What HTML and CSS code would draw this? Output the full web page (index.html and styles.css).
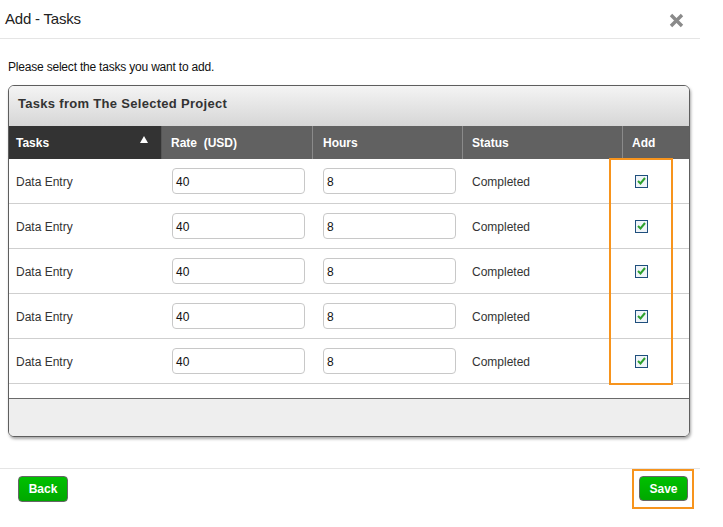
FILE: index.html
```html
<!DOCTYPE html>
<html>
<head>
<meta charset="utf-8">
<link rel="stylesheet" href="styles.css">
</head>
<body>
<div class="dialog">
  <div class="dlg-head">
    <span class="dlg-title">Add - Tasks</span>
    <svg class="close" width="15" height="15" viewBox="0 0 15 15"><path d="M2 2 L13 13 M13 2 L2 13" stroke="#8a8a8a" stroke-width="3.4" stroke-linecap="butt"/></svg>
  </div>
  <p class="intro">Please select the tasks you want to add.</p>
  <div class="panel">
    <div class="panel-title">Tasks from The Selected Project</div>
    <div class="grid">
      <div class="row head">
        <div class="c c1 sorted">Tasks<span class="tri"></span></div>
        <div class="c c2">Rate&nbsp; (USD)</div>
        <div class="c c3">Hours</div>
        <div class="c c4">Status</div>
        <div class="c c5">Add</div>
      </div>
      <div class="row">
        <div class="c c1">Data Entry</div>
        <div class="c c2"><span class="inp">40</span></div>
        <div class="c c3"><span class="inp">8</span></div>
        <div class="c c4">Completed</div>
        <div class="c c5"><span class="chk"><svg width="9" height="8" viewBox="0 0 9 8"><path d="M1 4 L3.5 6.5 L8 1" stroke="#2ea12e" stroke-width="2" fill="none"/></svg></span></div>
      </div>
      <div class="row">
        <div class="c c1">Data Entry</div>
        <div class="c c2"><span class="inp">40</span></div>
        <div class="c c3"><span class="inp">8</span></div>
        <div class="c c4">Completed</div>
        <div class="c c5"><span class="chk"><svg width="9" height="8" viewBox="0 0 9 8"><path d="M1 4 L3.5 6.5 L8 1" stroke="#2ea12e" stroke-width="2" fill="none"/></svg></span></div>
      </div>
      <div class="row">
        <div class="c c1">Data Entry</div>
        <div class="c c2"><span class="inp">40</span></div>
        <div class="c c3"><span class="inp">8</span></div>
        <div class="c c4">Completed</div>
        <div class="c c5"><span class="chk"><svg width="9" height="8" viewBox="0 0 9 8"><path d="M1 4 L3.5 6.5 L8 1" stroke="#2ea12e" stroke-width="2" fill="none"/></svg></span></div>
      </div>
      <div class="row">
        <div class="c c1">Data Entry</div>
        <div class="c c2"><span class="inp">40</span></div>
        <div class="c c3"><span class="inp">8</span></div>
        <div class="c c4">Completed</div>
        <div class="c c5"><span class="chk"><svg width="9" height="8" viewBox="0 0 9 8"><path d="M1 4 L3.5 6.5 L8 1" stroke="#2ea12e" stroke-width="2" fill="none"/></svg></span></div>
      </div>
      <div class="row">
        <div class="c c1">Data Entry</div>
        <div class="c c2"><span class="inp">40</span></div>
        <div class="c c3"><span class="inp">8</span></div>
        <div class="c c4">Completed</div>
        <div class="c c5"><span class="chk"><svg width="9" height="8" viewBox="0 0 9 8"><path d="M1 4 L3.5 6.5 L8 1" stroke="#2ea12e" stroke-width="2" fill="none"/></svg></span></div>
      </div>
      <div class="highlight"></div>
    </div>
    <div class="spacer"></div>
    <div class="panel-foot"></div>
  </div>
  <div class="dlg-foot">
    <button class="btn">Back</button>
    <span class="hl-btn"><button class="btn">Save</button></span>
  </div>
</div>
</body>
</html>
```
FILE: styles.css
```css
* { box-sizing: border-box; }
body {
  margin: 0;
  background: #fff;
  font-family: "Liberation Sans", Arial, sans-serif;
  color: #333;
}
.dialog { width: 700px; }
.dlg-head {
  height: 39px;
  border-bottom: 1px solid #e5e5e5;
  display: flex;
  align-items: center;
  justify-content: space-between;
  padding: 0 16px 0 5px;
}
.dlg-title {
  font-size: 15px;
  color: #222;
  letter-spacing: -0.2px;
  margin-top: -1px;
}
.close { margin-top: 2px; }
.intro {
  margin: 21px 0 0 8px;
  font-size: 12px;
  line-height: 14px;
  color: #111;
  letter-spacing: -0.2px;
}
.panel {
  margin: 11px 0 0 8px;
  width: 682px;
  border: 1px solid #5e5e5e;
  border-radius: 6px;
  box-shadow: 1px 2px 3px rgba(0,0,0,0.35);
  overflow: hidden;
}
.panel-title {
  height: 40px;
  background: linear-gradient(#f4f4f4, #d6d6d6);
  font-size: 13px;
  font-weight: bold;
  color: #333;
  padding: 10px 0 0 9px;
  letter-spacing: 0.3px;
}
.grid { position: relative; }
.row {
  display: flex;
  height: 45px;
  border-bottom: 1px solid #cfcfcf;
  font-size: 12px;
  align-items: center;
  color: #333;
}
.row.head {
  height: 33px;
  background: #616161;
  border-bottom: none;
  color: #fff;
  font-weight: bold;
  align-items: stretch;
}
.c { display: flex; align-items: center; height: 100%; }
.c1 { width: 153px; padding-left: 7px; padding-top: 1px; }
.c2 { width: 151px; padding-left: 10px; }
.c3 { width: 150px; padding-left: 10px; }
.c4 { width: 160px; padding-left: 9px; padding-top: 1px; }
.c5 { width: 66px; padding-left: 12px; }
.head .c { border-right: 1px solid #8a8a8a; padding-top: 1px; }
.head .c5 { border-right: none; padding-left: 9px; }
.head .c1 { border-right-color: #555; }
.head .c2 { padding-left: 9px; }
.sorted { background: #333; position: relative; justify-content: space-between; padding-right: 13px; }
.tri {
  width: 0; height: 0;
  border-left: 4px solid transparent;
  border-right: 4px solid transparent;
  border-bottom: 7px solid #fff;
  margin-top: -7px;
}
.inp {
  display: block;
  width: 133px;
  height: 26px;
  border: 1px solid #c8c8c8;
  border-radius: 4px;
  padding: 6px 0 0 3px;
  font-size: 12px;
  color: #111;
}
.chk {
  width: 13px;
  height: 13px;
  border: 1px solid #1f4f7d;
  background: #f0f4f8;
  display: flex;
  align-items: center;
  justify-content: center;
}
.highlight {
  position: absolute;
  left: 600px;
  top: 32px;
  width: 64px;
  height: 227px;
  border: 2px solid #f7941d;
}
.spacer { height: 15px; border-bottom: 1px solid #6a6a6a; }
.panel-foot { height: 37px; background: #eee; }
.dlg-foot {
  margin-top: 31px;
  border-top: 1px solid #e5e5e5;
  display: flex;
  justify-content: space-between;
  align-items: flex-start;
  padding: 7px 6px 0 18px;
}
.btn {
  width: 50px;
  height: 26px;
  border: 1px solid #666;
  border-radius: 4px;
  background: linear-gradient(#00c000, #00a800);
  color: #fff;
  font-family: "Liberation Sans", Arial, sans-serif;
  font-weight: bold;
  font-size: 12px;
  padding: 0;
}
.hl-btn {
  display: block;
  border: 2px solid #f7941d;
  padding: 5px 4px 6px 5px;
  margin-top: -7px;
}
.hl-btn .btn { width: 49px; height: 25px; display: block; }
```
